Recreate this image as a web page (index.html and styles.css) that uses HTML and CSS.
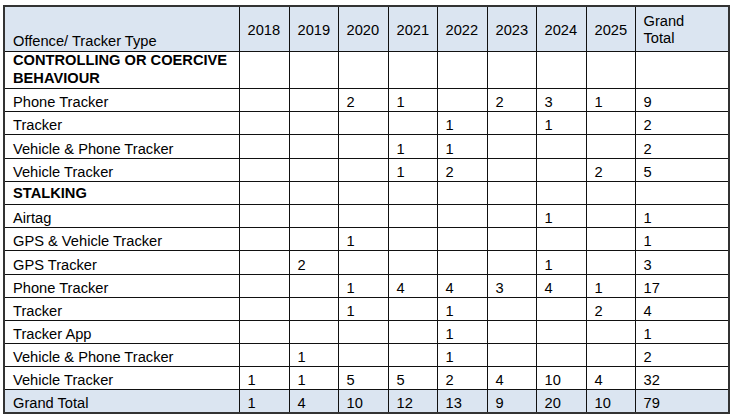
FILE: index.html
```html
<!DOCTYPE html>
<html>
<head>
<meta charset="utf-8">
<link rel="stylesheet" href="styles.css">
</head>
<body>
<table class="grid">
  <colgroup>
    <col class="c-type">
    <col class="c-yr"><col class="c-yr2"><col class="c-yr"><col class="c-yr2">
    <col class="c-yr"><col class="c-yr2"><col class="c-yr"><col class="c-yr2">
    <col class="c-tot">
  </colgroup>
  <thead>
    <tr class="head">
      <th class="h-type">Offence/ Tracker Type</th>
      <th>2018</th><th>2019</th><th>2020</th><th>2021</th><th>2022</th><th>2023</th><th>2024</th><th>2025</th>
      <th>Grand<br>Total</th>
    </tr>
  </thead>
  <tbody>
    <tr class="group tall"><td class="label">CONTROLLING OR COERCIVE BEHAVIOUR</td><td></td><td></td><td></td><td></td><td></td><td></td><td></td><td></td><td></td></tr>
    <tr><td>Phone Tracker</td><td></td><td></td><td>2</td><td>1</td><td></td><td>2</td><td>3</td><td>1</td><td>9</td></tr>
    <tr><td>Tracker</td><td></td><td></td><td></td><td></td><td>1</td><td></td><td>1</td><td></td><td>2</td></tr>
    <tr><td>Vehicle &amp; Phone Tracker</td><td></td><td></td><td></td><td>1</td><td>1</td><td></td><td></td><td></td><td>2</td></tr>
    <tr><td>Vehicle Tracker</td><td></td><td></td><td></td><td>1</td><td>2</td><td></td><td></td><td>2</td><td>5</td></tr>
    <tr class="group"><td class="label">STALKING</td><td></td><td></td><td></td><td></td><td></td><td></td><td></td><td></td><td></td></tr>
    <tr><td>Airtag</td><td></td><td></td><td></td><td></td><td></td><td></td><td>1</td><td></td><td>1</td></tr>
    <tr><td>GPS &amp; Vehicle Tracker</td><td></td><td></td><td>1</td><td></td><td></td><td></td><td></td><td></td><td>1</td></tr>
    <tr><td>GPS Tracker</td><td></td><td>2</td><td></td><td></td><td></td><td></td><td>1</td><td></td><td>3</td></tr>
    <tr><td>Phone Tracker</td><td></td><td></td><td>1</td><td>4</td><td>4</td><td>3</td><td>4</td><td>1</td><td>17</td></tr>
    <tr><td>Tracker</td><td></td><td></td><td>1</td><td></td><td>1</td><td></td><td></td><td>2</td><td>4</td></tr>
    <tr><td>Tracker App</td><td></td><td></td><td></td><td></td><td>1</td><td></td><td></td><td></td><td>1</td></tr>
    <tr><td>Vehicle &amp; Phone Tracker</td><td></td><td>1</td><td></td><td></td><td>1</td><td></td><td></td><td></td><td>2</td></tr>
    <tr><td>Vehicle Tracker</td><td>1</td><td>1</td><td>5</td><td>5</td><td>2</td><td>4</td><td>10</td><td>4</td><td>32</td></tr>
    <tr class="total"><td>Grand Total</td><td>1</td><td>4</td><td>10</td><td>12</td><td>13</td><td>9</td><td>20</td><td>10</td><td>79</td></tr>
  </tbody>
</table>
</body>
</html>
```
FILE: styles.css
```css
html, body {
  margin: 0;
  padding: 0;
  background: #ffffff;
}

body {
  font-family: "Liberation Sans", Arial, sans-serif;
  font-size: 14.67px;
  color: #000;
}

.grid {
  border-collapse: collapse;
  table-layout: fixed;
  width: 725px;
  margin: 5px 0 0 3px;
  border: 2px solid #333;
}

.c-type { width: 235px; }
.c-yr { width: 50px; }
.c-yr2 { width: 49px; }
.c-tot { width: 94px; }

.grid th,
.grid td {
  border: 1px solid #111;
  padding: 0 4px 0 8px;
  text-align: left;
  vertical-align: bottom;
  line-height: 17px;
  font-weight: normal;
  white-space: normal;
}

.head th {
  background: #dbe5f1;
  vertical-align: middle;
  height: 42px;
  padding-top: 2px;
  padding-bottom: 0;
}

.head th.h-type {
  vertical-align: bottom;
  padding-top: 0;
  padding-bottom: 1px;
}

.grid tbody tr {
  height: 23.2px;
}

.grid tbody tr.tall {
  height: 36px;
}

.grid tbody td {
  padding-bottom: 0;
}

.group .label {
  font-weight: bold;
  line-height: 17.5px;
  padding-bottom: 1px;
}

.total td {
  background: #dbe5f1;
}
```
